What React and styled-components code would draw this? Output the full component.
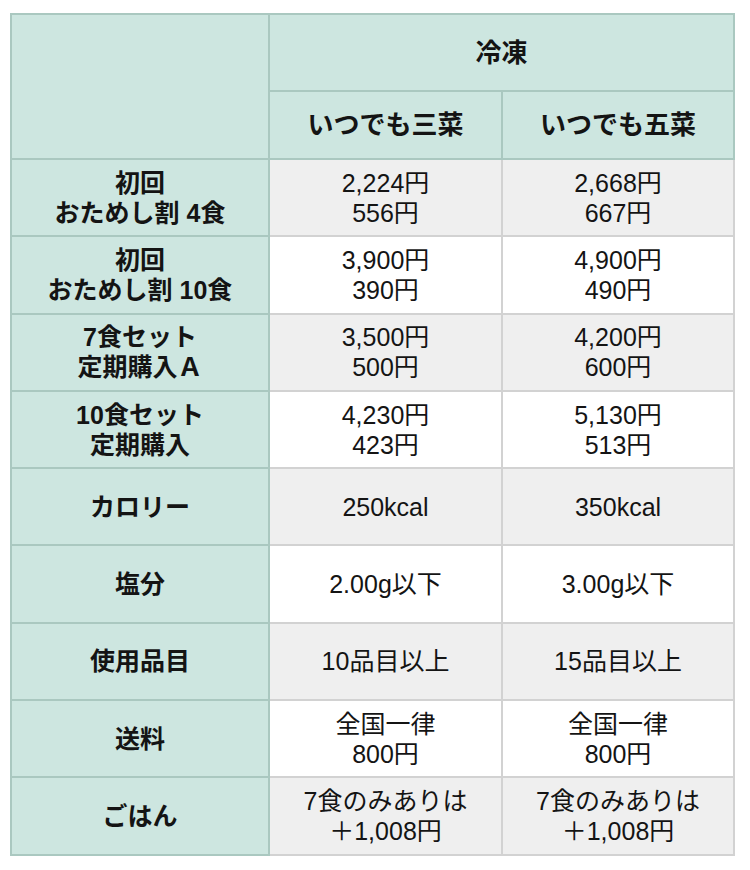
import React from "react";
import styled, { createGlobalStyle } from "styled-components";

const GlobalStyle = createGlobalStyle`
  html, body {
    margin: 0;
    padding: 0;
    background: #ffffff;
  }
  body {
    font-family: "Liberation Sans", "Noto Sans CJK JP", sans-serif;
    color: #141414;
  }
`;

const Page = styled.div`
  padding: 13px 0 0 10px;
`;

const Table = styled.table`
  border-collapse: collapse;
  table-layout: fixed;
  width: 723px;
  border: 2px solid #b4cfc8;
`;

const HeadCell = styled.th`
  background: #cde6e0;
  border: 2px solid #aac8c0;
  height: ${(p) => p.h}px;
  padding: 0;
  font-size: ${(p) => (p.top ? 26 : 25)}px;
  font-weight: 700;
  line-height: 30px;
  text-align: center;
  vertical-align: middle;
  box-sizing: border-box;
`;

const DataCell = styled.td`
  background: ${(p) => (p.shade ? "#efefef" : "#ffffff")};
  border: 2px solid #d2d2d2;
  height: 77.3px;
  padding: 0;
  font-size: 25px;
  line-height: 30px;
  text-align: center;
  vertical-align: middle;
  box-sizing: border-box;
`;

const Line = styled.div`
  white-space: nowrap;
`;

const rows = [
  { head: ["初回", "おためし割 4食"], a: ["2,224円", "556円"], b: ["2,668円", "667円"] },
  { head: ["初回", "おためし割 10食"], a: ["3,900円", "390円"], b: ["4,900円", "490円"] },
  { head: ["7食セット", "定期購入Ａ"], a: ["3,500円", "500円"], b: ["4,200円", "600円"] },
  { head: ["10食セット", "定期購入"], a: ["4,230円", "423円"], b: ["5,130円", "513円"] },
  { head: ["カロリー"], a: ["250kcal"], b: ["350kcal"] },
  { head: ["塩分"], a: ["2.00g以下"], b: ["3.00g以下"] },
  { head: ["使用品目"], a: ["10品目以上"], b: ["15品目以上"] },
  { head: ["送料"], a: ["全国一律", "800円"], b: ["全国一律", "800円"] },
  { head: ["ごはん"], a: ["7食のみありは", "＋1,008円"], b: ["7食のみありは", "＋1,008円"] },
];

const Lines = ({ items }) =>
  items.map((t, i) => <Line key={i}>{t}</Line>);

export default function App() {
  return (
    <>
      <GlobalStyle />
      <Page>
        <Table>
          <colgroup>
            <col style={{ width: 258 }} />
            <col style={{ width: 233 }} />
            <col style={{ width: 232 }} />
          </colgroup>
          <thead>
            <tr>
              <HeadCell h={77} rowSpan={2} />
              <HeadCell h={77} top colSpan={2}>
                冷凍
              </HeadCell>
            </tr>
            <tr>
              <HeadCell h={68} top>いつでも三菜</HeadCell>
              <HeadCell h={68} top>いつでも五菜</HeadCell>
            </tr>
          </thead>
          <tbody>
            {rows.map((r, i) => (
              <tr key={i}>
                <HeadCell h={77.3} as="th" scope="row">
                  <Lines items={r.head} />
                </HeadCell>
                <DataCell shade={i % 2 === 0}>
                  <Lines items={r.a} />
                </DataCell>
                <DataCell shade={i % 2 === 0}>
                  <Lines items={r.b} />
                </DataCell>
              </tr>
            ))}
          </tbody>
        </Table>
      </Page>
    </>
  );
}
